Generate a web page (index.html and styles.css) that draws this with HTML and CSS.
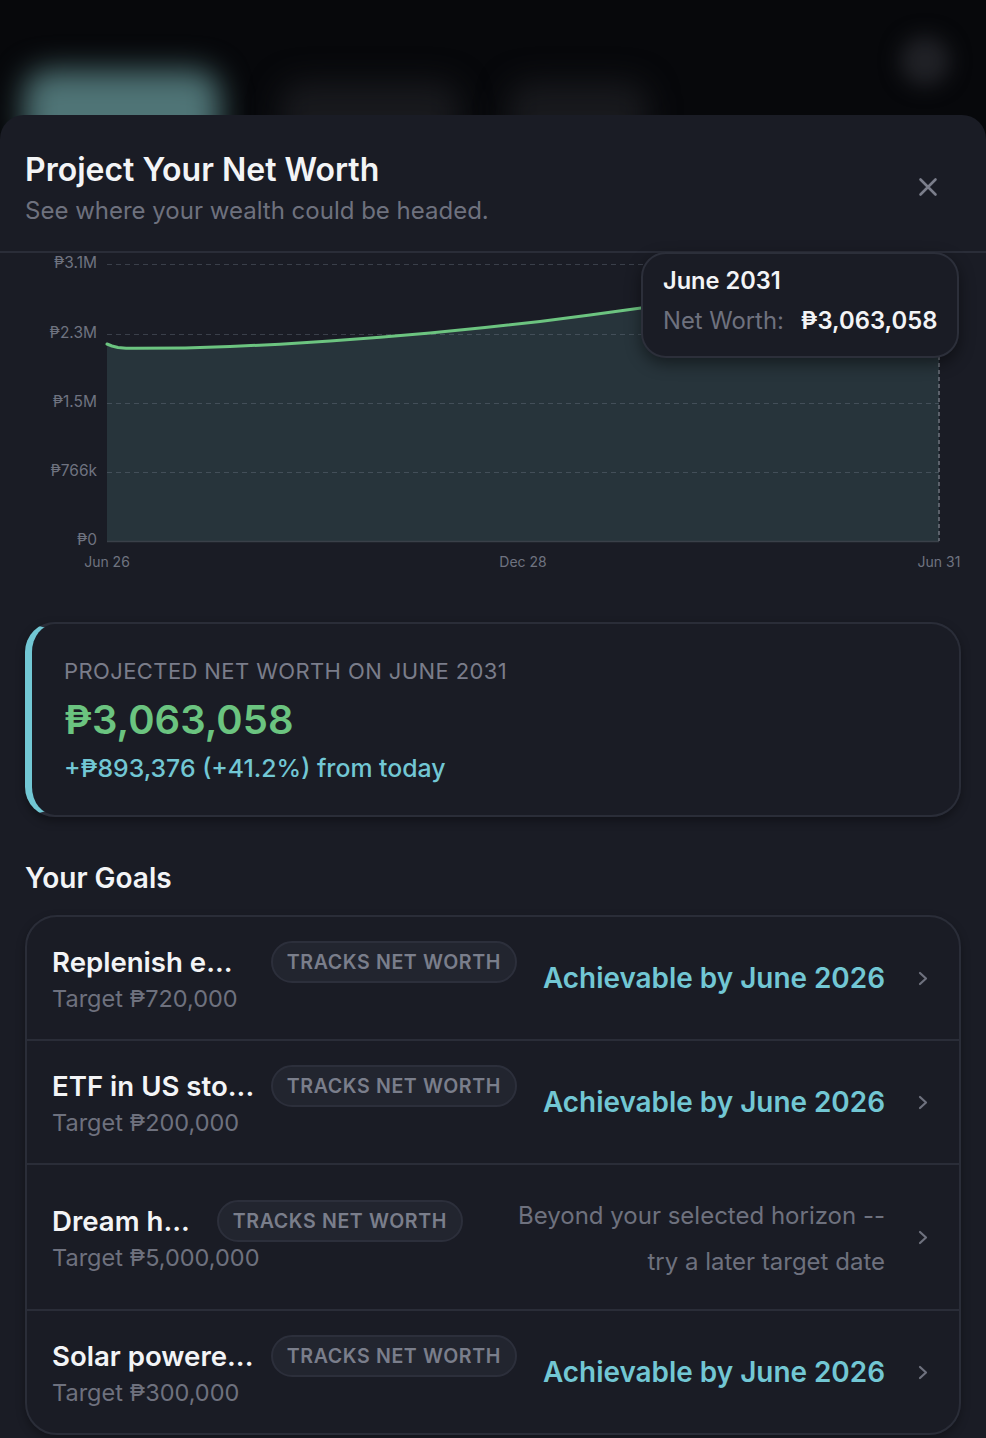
FILE: index.html
```html
<!DOCTYPE html>
<html lang="en">
<head>
<meta charset="utf-8">
<title>Project Your Net Worth</title>
<link rel="stylesheet" href="styles.css">
</head>
<body>
<div class="backdrop" aria-hidden="true">
  <span class="blob blob--primary"></span>
  <span class="blob blob--tab"></span>
  <span class="blob blob--tab blob--tab-short"></span>
  <span class="blob blob--avatar"></span>
</div>
<main class="sheet">
  <header class="sheet-header">
    <div class="sheet-titles">
      <h1 class="sheet-title">Project Your Net Worth</h1>
      <p class="sheet-subtitle">See where your wealth could be headed.</p>
    </div>
    <button class="close-btn" type="button" aria-label="Close">
      <svg viewBox="0 0 20 20" width="20" height="20"><path d="M2.5 2.5 L17.5 17.5 M17.5 2.5 L2.5 17.5"/></svg>
    </button>
  </header>

  <section class="chart">
    <svg class="chart-svg" viewBox="0 253 986 340" width="986" height="340">
      <path class="chart-area" d="M107,344 L112,346 L118,347.5 L126,348.2 L135,348.3 L185,347.9 L230,346.6 L280,344.2 L330,341 L380,337.2 L430,333 L485,327.5 L540,321.5 L590,315 L641,308 L690,301.2 L740,294 L790,286.8 L840,279.5 L890,272 L939,264.5 L939,541.5 L107,541.5 Z"/>
      <g class="chart-grid">
        <line x1="107" y1="264.5" x2="939" y2="264.5"/>
        <line x1="107" y1="334.5" x2="939" y2="334.5"/>
        <line x1="107" y1="403.5" x2="939" y2="403.5"/>
        <line x1="107" y1="472.5" x2="939" y2="472.5"/>
      </g>
      <line class="chart-axis" x1="107" y1="541.5" x2="939" y2="541.5"/>
      <line class="chart-cursor" x1="939" y1="300" x2="939" y2="541"/>
      <path class="chart-line" d="M107,344 L112,346 L118,347.5 L126,348.2 L135,348.3 L185,347.9 L230,346.6 L280,344.2 L330,341 L380,337.2 L430,333 L485,327.5 L540,321.5 L590,315 L641,308 L690,301.2 L740,294 L790,286.8 L840,279.5 L890,272 L939,264.5"/>
      <g class="chart-ylabels">
        <text x="97" y="264">₱3.1M</text>
        <text x="97" y="334">₱2.3M</text>
        <text x="97" y="403">₱1.5M</text>
        <text x="97" y="472">₱766k</text>
        <text x="97" y="541">₱0</text>
      </g>
      <g class="chart-xlabels">
        <text x="107" y="563">Jun 26</text>
        <text x="523" y="563">Dec 28</text>
        <text x="939" y="563">Jun 31</text>
      </g>
    </svg>
    <div class="tooltip">
      <div class="tooltip-date">June 2031</div>
      <div class="tooltip-row"><span class="tooltip-label">Net Worth:</span><span class="tooltip-value">₱3,063,058</span></div>
    </div>
  </section>

  <section class="projection-card">
    <div class="projection-label">Projected net worth on June 2031</div>
    <div class="projection-amount">₱3,063,058</div>
    <div class="projection-delta">+₱893,376 (+41.2%) from today</div>
  </section>

  <h2 class="goals-heading">Your Goals</h2>

  <ul class="goal-list">
    <li class="goal">
      <div class="goal-info">
        <div class="goal-headline">
          <span class="goal-name">Replenish e...</span>
          <span class="badge">Tracks net worth</span>
        </div>
        <div class="goal-target">Target ₱720,000</div>
      </div>
      <div class="goal-status goal-status--ok">Achievable by June 2026</div>
      <svg class="chevron" viewBox="0 0 10 15" width="10" height="15"><path d="M2 2 L8 7.5 L2 13"/></svg>
    </li>
    <li class="goal">
      <div class="goal-info">
        <div class="goal-headline">
          <span class="goal-name">ETF in US sto...</span>
          <span class="badge">Tracks net worth</span>
        </div>
        <div class="goal-target">Target ₱200,000</div>
      </div>
      <div class="goal-status goal-status--ok">Achievable by June 2026</div>
      <svg class="chevron" viewBox="0 0 10 15" width="10" height="15"><path d="M2 2 L8 7.5 L2 13"/></svg>
    </li>
    <li class="goal">
      <div class="goal-info">
        <div class="goal-headline">
          <span class="goal-name">Dream h...</span>
          <span class="badge">Tracks net worth</span>
        </div>
        <div class="goal-target">Target ₱5,000,000</div>
      </div>
      <div class="goal-status goal-status--far">Beyond your selected horizon -- try a later target date</div>
      <svg class="chevron" viewBox="0 0 10 15" width="10" height="15"><path d="M2 2 L8 7.5 L2 13"/></svg>
    </li>
    <li class="goal">
      <div class="goal-info">
        <div class="goal-headline">
          <span class="goal-name">Solar powere...</span>
          <span class="badge">Tracks net worth</span>
        </div>
        <div class="goal-target">Target ₱300,000</div>
      </div>
      <div class="goal-status goal-status--ok">Achievable by June 2026</div>
      <svg class="chevron" viewBox="0 0 10 15" width="10" height="15"><path d="M2 2 L8 7.5 L2 13"/></svg>
    </li>
  </ul>
</main>
</body>
</html>
```

FILE: styles.css
```css
* { box-sizing: border-box; }

html, body {
  margin: 0;
  padding: 0;
}

body {
  font-family: Inter, "Noto Sans", "DejaVu Sans", sans-serif;
  color: #f1f2f4;
  background: #07080b;
  overflow: hidden;
}

/* Blurred app content behind the sheet */
.backdrop {
  height: 115px;
  display: flex;
  align-items: flex-start;
  padding: 36px 36px 0 24px;
}

.blob {
  flex: none;
  display: block;
  filter: blur(15px);
}

.blob--primary {
  width: 196px;
  height: 84px;
  margin-top: 34px;
  border-radius: 24px;
  background: #4f7476;
}

.blob--tab {
  width: 180px;
  height: 70px;
  margin: 46px 0 0 60px;
  border-radius: 22px;
  background: #18191d;
}

.blob--tab-short {
  width: 140px;
  margin-left: 48px;
}

.blob--avatar {
  width: 50px;
  height: 50px;
  margin-left: auto;
  border-radius: 50%;
  background: #202126;
  filter: blur(10px);
}

.sheet {
  position: relative;
  z-index: 1;
  background: #1a1c25;
  border-radius: 24px 24px 0 0;
  padding-bottom: 40px;
}

/* Header */
.sheet-header {
  display: flex;
  align-items: center;
  justify-content: space-between;
  padding: 36px 48px 25px 25px;
  border-bottom: 2px solid #2a2d38;
}

.sheet-title {
  margin: 0;
  font-size: 32px;
  line-height: 38px;
  font-weight: 600;
  color: #f3f4f6;
}

.sheet-subtitle {
  margin: 7px 0 0;
  font-size: 24px;
  line-height: 30px;
  font-weight: 400;
  color: #6e717e;
}

.close-btn {
  border: 0;
  padding: 0;
  background: transparent;
  width: 20px;
  height: 20px;
  display: block;
  margin-top: -3px;
}

.close-btn svg {
  display: block;
  stroke: #7b7e8b;
  stroke-width: 2.6;
  stroke-linecap: round;
  fill: none;
}

/* Chart */
.chart {
  position: relative;
  height: 340px;
}

.chart-svg {
  display: block;
}

.chart-area {
  fill: #27343b;
}

.chart-grid line {
  stroke: rgba(128, 136, 152, 0.32);
  stroke-width: 1;
  stroke-dasharray: 5 4;
}

.chart-axis {
  stroke: #3a4049;
  stroke-width: 1.5;
}

.chart-cursor {
  stroke: #6f737e;
  stroke-width: 1.5;
  stroke-dasharray: 4 3;
}

.chart-line {
  fill: none;
  stroke: #6cc480;
  stroke-width: 3;
  stroke-linejoin: round;
  stroke-linecap: round;
}

.chart-ylabels text,
.chart-xlabels text {
  font-family: Inter, "Noto Sans", "DejaVu Sans", sans-serif;
  font-size: 14px;
  fill: #6f7380;
  dominant-baseline: middle;
}

.chart-ylabels text {
  text-anchor: end;
  font-size: 15.5px;
}

.chart-xlabels text { text-anchor: middle; }

.tooltip {
  position: absolute;
  left: 641px;
  top: -1px;
  width: 318px;
  height: 106px;
  padding: 12px 20px 0;
  background: #1a1c25;
  border: 2px solid #2c2f3a;
  border-radius: 25px;
  box-shadow: 0 6px 16px rgba(0, 0, 0, 0.45);
}

.tooltip-date {
  font-size: 23.6px;
  line-height: 30px;
  font-weight: 600;
  color: #f3f4f6;
}

.tooltip-row {
  margin-top: 10px;
  font-size: 23.8px;
  line-height: 30px;
  white-space: nowrap;
}

.tooltip-label {
  color: #6e717e;
}

.tooltip-value {
  margin-left: 17px;
  font-weight: 600;
  color: #f3f4f6;
}

/* Projection card */
.projection-card {
  margin: 29px 25px 0;
  border: 2px solid #2a2d38;
  border-left: 7px solid #72c7d4;
  border-radius: 30px;
  padding: 33px 30px 32px 32px;
  box-shadow: 0 4px 10px rgba(0, 0, 0, 0.35);
}

.projection-label {
  font-size: 22px;
  line-height: 28px;
  color: #7a7d8a;
  text-transform: uppercase;
  letter-spacing: 0.4px;
}

.projection-amount {
  margin-top: 11px;
  font-size: 40px;
  line-height: 48px;
  font-weight: 600;
  color: #6bc480;
}

.projection-delta {
  margin-top: 9px;
  font-size: 24.8px;
  line-height: 30px;
  font-weight: 500;
  color: #72c7d4;
}

/* Goals */
.goals-heading {
  margin: 43px 25px 0;
  font-size: 28px;
  line-height: 36px;
  font-weight: 600;
  color: #f3f4f6;
}

.goal-list {
  list-style: none;
  margin: 19px 25px 0;
  padding: 0;
  border: 2px solid #2a2d38;
  border-radius: 32px;
  box-shadow: 0 4px 10px rgba(0, 0, 0, 0.3);
}

.goal {
  display: flex;
  align-items: center;
  padding: 24px 31px 24px 25px;
}

.goal + .goal {
  border-top: 2px solid #2a2d38;
}

.goal-info {
  flex: 1 1 0;
  min-width: 0;
}

.goal-headline {
  display: flex;
  align-items: center;
  gap: 16px;
  height: 42px;
}

.goal-name {
  flex: 1 1 0;
  min-width: 0;
  white-space: nowrap;
  font-size: 27.6px;
  font-weight: 600;
  color: #f3f4f6;
}

.badge {
  flex: none;
  height: 42px;
  display: flex;
  align-items: center;
  padding: 0 14px;
  border: 2px solid #2c2f3b;
  border-radius: 21px;
  background: #22252f;
  font-size: 19.6px;
  font-weight: 600;
  letter-spacing: 0.6px;
  text-transform: uppercase;
  color: #7a7e8b;
}

.goal-target {
  font-size: 23.5px;
  line-height: 32px;
  color: #6e717e;
}

.goal-status {
  flex: none;
  max-width: 396px;
  margin-left: 26px;
  text-align: right;
}

.goal-status--ok {
  font-size: 27.9px;
  font-weight: 600;
  color: #72c7d4;
}

.goal-status--far {
  font-size: 24px;
  line-height: 46px;
  padding-top: 4px;
  color: #6e717e;
}

.chevron {
  flex: none;
  margin-left: 33px;
  fill: none;
  stroke: #6e717e;
  stroke-width: 2.2;
  stroke-linecap: round;
  stroke-linejoin: round;
}
```
